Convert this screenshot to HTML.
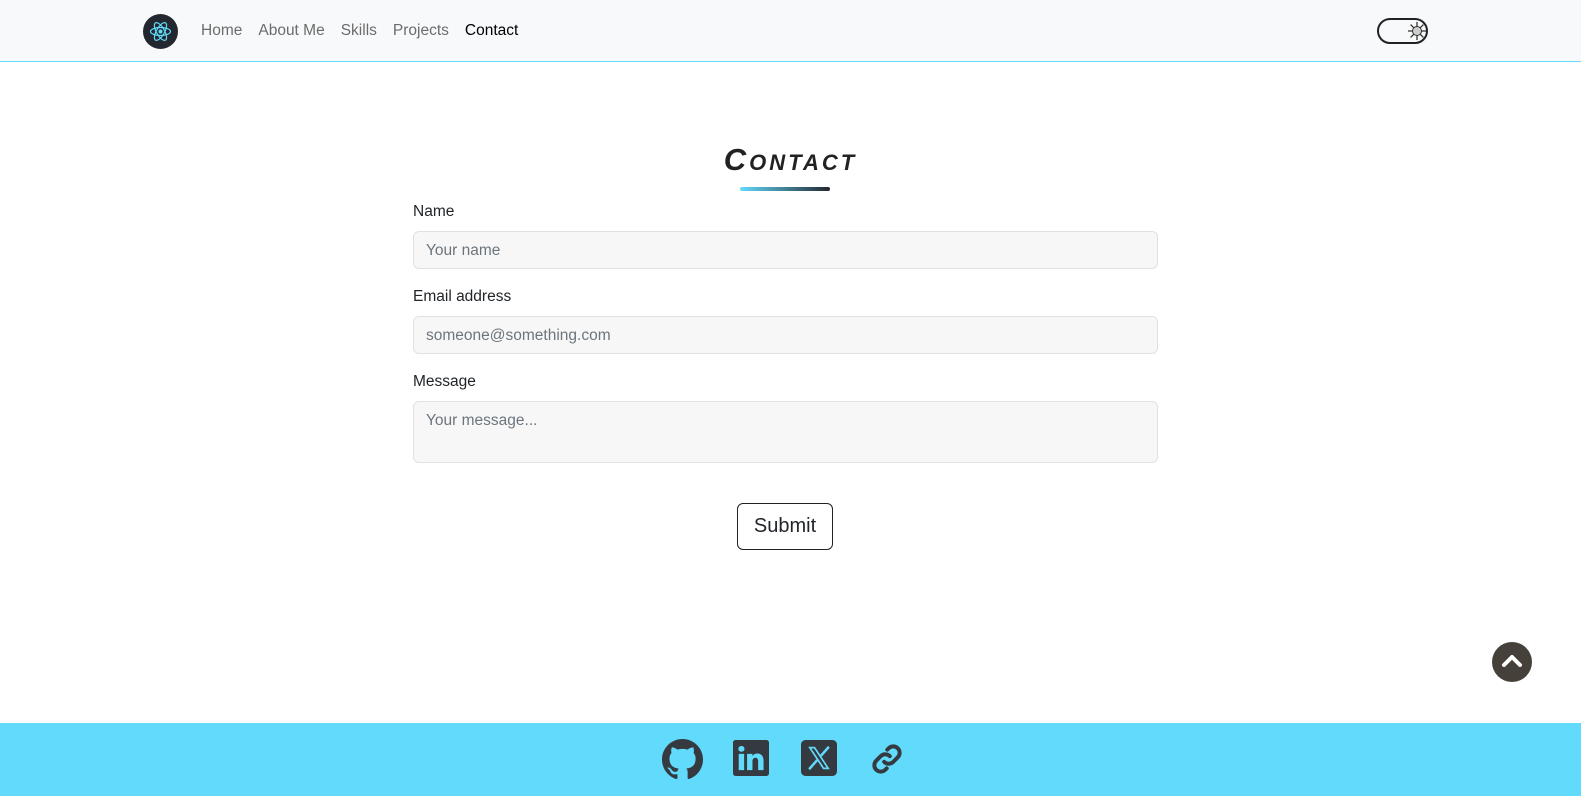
<!DOCTYPE html>
<html><head><meta charset="utf-8"><style>
*{box-sizing:border-box;margin:0;padding:0}
body{width:1581px;height:796px;overflow:hidden;background:#fff;font-family:"Liberation Sans",sans-serif;color:#212529;position:relative}
.nav{position:absolute;left:0;top:0;width:1581px;height:62px;background:#f8f9fa;border-bottom:1px solid #61dafb}
.logo{position:absolute;left:143px;top:14px;width:35px;height:35px;border-radius:50%;background:#23272f}
.links{position:absolute;left:201px;top:22px;font-size:15.5px;color:#6c6c6c;white-space:nowrap}
.links span{margin-right:16px}
.toggle{position:absolute;left:1377px;top:18px;width:51px;height:26px;border:2px solid #222;border-radius:13px}
h2{position:absolute;left:0;width:1581px;top:142px;text-align:center;font-size:31px;font-weight:900;font-style:italic;font-variant:small-caps;color:#222;letter-spacing:3px}
.bar{position:absolute;left:740px;top:187px;width:90px;height:4px;border-radius:2px;background:linear-gradient(90deg,#61dafb,#23272f)}
label{position:absolute;left:413px;font-size:15.5px;color:#212529}
.in{position:absolute;left:413px;width:745px;height:38px;background:#f7f7f7;border:1px solid #dee2e6;border-radius:6px;font-size:15.5px;color:#6c757d;padding:10px 12px}
.btn{position:absolute;left:737px;top:503px;width:96px;height:47px;border:1px solid #222;border-radius:6px;font-size:20px;text-align:center;line-height:45px;color:#212529}
.up{position:absolute;left:1492px;top:642px;width:40px;height:40px;border-radius:50%;background:#45413a}
.foot{position:absolute;left:0;top:723px;width:1581px;height:73px;background:#61dafb}
</style></head><body>
<div class="nav">
<div class="logo"><svg width="35" height="35" viewBox="0 0 35 35"><g fill="none" stroke="#61dafb" stroke-width="1.2"><ellipse cx="17.5" cy="17.5" rx="10" ry="4"/><ellipse cx="17.5" cy="17.5" rx="10" ry="4" transform="rotate(60 17.5 17.5)"/><ellipse cx="17.5" cy="17.5" rx="10" ry="4" transform="rotate(120 17.5 17.5)"/></g><circle cx="17.5" cy="17.5" r="2" fill="#61dafb"/></svg></div>
<div class="links"><span>Home</span><span>About Me</span><span>Skills</span><span>Projects</span><span style="color:#000">Contact</span></div>
<div class="toggle"><svg style="position:absolute;left:29px;top:2px" width="18" height="18" viewBox="0 0 18 18"><g stroke="#333" stroke-width="1.3"><line x1="9" y1="0" x2="9" y2="18"/><line x1="0" y1="9" x2="18" y2="9"/><line x1="2.6" y1="2.6" x2="15.4" y2="15.4"/><line x1="15.4" y1="2.6" x2="2.6" y2="15.4"/></g><circle cx="9" cy="9" r="4.5" fill="#ccc" stroke="#333"/></svg></div>
</div>
<h2>Contact</h2>
<div class="bar"></div>
<label style="top:203px">Name</label>
<div class="in" style="top:231px">Your name</div>
<label style="top:288px">Email address</label>
<div class="in" style="top:316px">someone@something.com</div>
<label style="top:373px">Message</label>
<div class="in" style="top:401px;height:62px">Your message...</div>
<div class="btn">Submit</div>
<div class="up"><svg width="40" height="40" viewBox="0 0 40 40"><path d="M12 23 L20 15 L28 23" fill="none" stroke="#fff" stroke-width="4" stroke-linecap="round" stroke-linejoin="round"/></svg></div>
<div class="foot">
<svg style="position:absolute;left:662px;top:16px" width="41" height="41" viewBox="0 0 16 16"><path fill="#343a40" d="M8 0C3.580 0 0 3.580 0 8c0 3.540 2.290 6.530 5.470 7.590.4.07.55-.17.55-.38 0-.19-.01-.82-.01-1.490-2.010.37-2.530-.49-2.690-.94-.09-.23-.48-.94-.82-1.130-.28-.15-.68-.52-.01-.53.63-.01 1.080.58 1.230.82.72 1.210 1.870.87 2.330.66.07-.52.28-.87.51-1.070-1.780-.2-3.640-.89-3.640-3.950 0-.87.31-1.590.82-2.150-.08-.2-.36-1.020.08-2.120 0 0 .67-.21 2.200.82.64-.18 1.320-.27 2-.27.68 0 1.360.09 2 .27 1.530-1.040 2.200-.82 2.200-.82.44 1.100.16 1.920.08 2.120.51.56.82 1.270.82 2.150 0 3.070-1.870 3.750-3.650 3.950.29.25.54.73.54 1.480 0 1.070-.01 1.930-.01 2.200 0 .21.15.46.55.38A8.012 8.012 0 0 0 16 8c0-4.420-3.580-8-8-8z"/></svg>
<svg style="position:absolute;left:733px;top:17px" width="36" height="36" viewBox="0 0 16 16"><path fill="#343a40" d="M0 1.146C0 .513.526 0 1.175 0h13.65C15.474 0 16 .513 16 1.146v13.708c0 .633-.526 1.146-1.175 1.146H1.175C.526 16 0 15.487 0 14.854V1.146zm4.943 12.248V6.169H2.542v7.225h2.401zm-1.2-8.212c.837 0 1.358-.554 1.358-1.248-.015-.709-.52-1.248-1.342-1.248-.822 0-1.359.54-1.359 1.248 0 .694.521 1.248 1.327 1.248h.016zm4.908 8.212V9.359c0-.216.016-.432.08-.586.173-.431.568-.878 1.232-.878.869 0 1.216.662 1.216 1.634v3.865h2.401V9.25c0-2.220-1.184-3.252-2.764-3.252-1.274 0-1.845.7-2.165 1.193v.025h-.016a5.54 5.540 0 0 1 .016-.025V6.169h-2.4c.03.678 0 7.225 0 7.225h2.4z"/></svg>
<svg style="position:absolute;left:801px;top:17px" width="36" height="36" viewBox="0 0 16 16"><rect width="16" height="16" rx="2" fill="#343a40"/><path fill="#61dafb" d="M3.2 3h3l6.6 10h-3zM4.6 3.8h1.2l5.6 8.4h-1.2z" fill-rule="evenodd"/><path stroke="#61dafb" stroke-width="1.1" d="M12.4 3 8.8 7.1M7.2 8.9 3.6 13"/></svg>
<svg style="position:absolute;left:868px;top:19px" width="38" height="34" viewBox="0 0 24 24"><g fill="none" stroke="#343a40" stroke-width="2.8" stroke-linecap="round"><path d="M10 14a4.5 4.5 0 0 0 6.4 0l3.2-3.2a4.5 4.5 0 0 0-6.4-6.4l-1 1"/><path d="M14 10a4.5 4.5 0 0 0-6.4 0l-3.2 3.2a4.5 4.5 0 0 0 6.4 6.4l1-1"/></g></svg>
</div>
</body></html>
